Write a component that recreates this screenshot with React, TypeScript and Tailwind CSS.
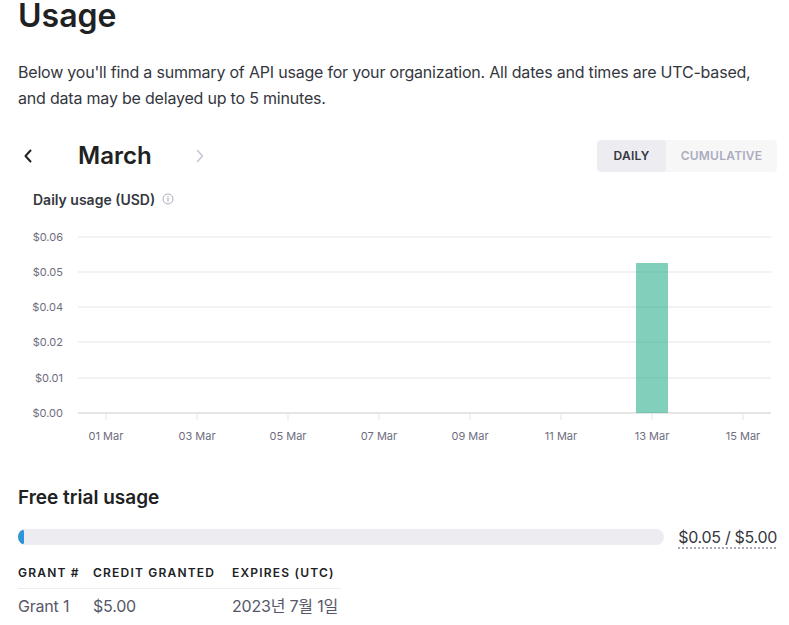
import React from "react";

const yTicks = [
  { label: "$0.06", y: 17 },
  { label: "$0.05", y: 52 },
  { label: "$0.04", y: 87 },
  { label: "$0.02", y: 122 },
  { label: "$0.01", y: 158 },
  { label: "$0.00", y: 193 },
];
const xTicks = ["01 Mar", "03 Mar", "05 Mar", "07 Mar", "09 Mar", "11 Mar", "13 Mar", "15 Mar"];

function Chart() {
  return (
    <svg width={759} height={230} className="block" style={{ fontFamily: "Inter, 'Noto Sans', sans-serif" }}>
      {yTicks.map((t) => (
        <g key={t.label}>
          <line x1={60} x2={753} y1={t.y} y2={t.y} stroke="#e5e5e5" strokeWidth={t.y === 193 ? 2 : 1} />
          <text x={45} y={t.y + 4} textAnchor="end" fontSize={11} fill="#6e6e80">
            {t.label}
          </text>
        </g>
      ))}
      {xTicks.map((l, i) => {
        const x = 88 + 91 * i;
        return (
          <g key={l}>
            <line x1={x} x2={x} y1={194} y2={200} stroke="#e5e5e5" strokeWidth={1} />
            <text x={x} y={220} textAnchor="middle" fontSize={11} fill="#6e6e80">
              {l}
            </text>
          </g>
        );
      })}
      <rect x={618} y={43} width={32} height={150} fill="#10a37f" fillOpacity={0.52} />
    </svg>
  );
}

export default function App() {
  return (
    <div className="w-[789px] h-[625px] overflow-hidden bg-white pl-[18px] pr-[12px] text-[#353740]" style={{ fontFamily: "Inter, 'Noto Sans', 'Noto Sans CJK KR', sans-serif" }}>
      <h1 className="mt-[-4px] text-[32px] leading-[40px] font-semibold text-[#202123]">Usage</h1>
      <p className="mt-[23px] pr-[6px] text-[16px] leading-[26px] tracking-[-0.2px] text-[#353740]">
        Below you'll find a summary of API usage for your organization. All dates and times are UTC-based, and data may be delayed up to 5 minutes.
      </p>
      <div className="mt-[29px] flex h-[32px] items-center justify-between">
        <div className="flex items-center">
          <button className="ml-[3px] flex h-[20px] w-[14px] items-center justify-center text-[#202123]">
            <svg width="10" height="14" viewBox="0 0 10 14" fill="none">
              <path d="M7.5 1.5L2.5 7l5 5.5" stroke="currentColor" strokeWidth="2" strokeLinecap="round" strokeLinejoin="round" />
            </svg>
          </button>
          <div className="ml-[43px] text-[24px] font-semibold leading-[32px] text-[#202123]">March</div>
          <button className="ml-[42px] flex h-[20px] w-[12px] items-center justify-center text-[#c5c5d2]">
            <svg width="10" height="14" viewBox="0 0 10 14" fill="none">
              <path d="M2.5 1.5L7.5 7l-5 5.5" stroke="currentColor" strokeWidth="1.5" strokeLinecap="round" strokeLinejoin="round" />
            </svg>
          </button>
        </div>
        <div className="flex h-[32px] overflow-hidden rounded-[4px] bg-[#f7f7f8] text-[12px] font-semibold tracking-[0.02em]">
          <div className="flex w-[69px] items-center justify-center rounded-[4px] bg-[#ececf1] text-[#353740]">DAILY</div>
          <div className="flex w-[111px] items-center justify-center text-[#acacbe]">CUMULATIVE</div>
        </div>
      </div>
      <div className="mt-[17px] flex h-[20px] items-center pl-[15px] text-[14px] font-semibold text-[#353740]">
        Daily usage (USD)
        <svg className="ml-[7px]" width="12" height="12" viewBox="0 0 12 12" fill="none">
          <circle cx="6" cy="6" r="5" stroke="#acacbe" strokeWidth="1" />
          <path d="M6 5.2v3" stroke="#acacbe" strokeWidth="1.1" strokeLinecap="round" />
          <circle cx="6" cy="3.7" r="0.65" fill="#acacbe" />
        </svg>
      </div>
      <div className="mt-[11px]">
        <Chart />
      </div>
      <h2 className="mt-[34px] text-[19px] font-semibold leading-[28px] text-[#202123]">Free trial usage</h2>
      <div className="mt-[14px] flex items-center">
        <div className="h-[16px] w-[646px] overflow-hidden rounded-full bg-[#ececf1]">
          <div className="h-full w-[6px] rounded-full bg-[#2d95d8]" />
        </div>
        <div className="ml-auto text-[16px] leading-[22px] tracking-[-0.3px] text-[#353740] underline decoration-dotted decoration-[#8e8ea0] underline-offset-[5px]">
          $0.05 / $5.00
        </div>
      </div>
      <table className="mt-[17px] border-collapse text-left">
        <thead>
          <tr className="border-b border-[#ececf1]">
            <th className="h-[23px] w-[75px] p-0 align-top text-[12px] font-semibold leading-[16px] tracking-[0.1em] text-[#202123]">GRANT #</th>
            <th className="h-[23px] w-[139px] p-0 align-top text-[12px] font-semibold leading-[16px] tracking-[0.1em] text-[#202123]">CREDIT GRANTED</th>
            <th className="h-[23px] w-[109px] p-0 align-top text-[12px] font-semibold leading-[16px] tracking-[0.1em] text-[#202123] whitespace-nowrap">EXPIRES (UTC)</th>
          </tr>
        </thead>
        <tbody>
          <tr>
            <td className="p-0 pt-[5px] text-[16px] leading-[24px] tracking-[-0.2px] text-[#565869]">Grant 1</td>
            <td className="p-0 pt-[5px] text-[16px] leading-[24px] tracking-[-0.2px] text-[#565869]">$5.00</td>
            <td className="p-0 pt-[5px] text-[16px] leading-[24px] tracking-[-0.2px] text-[#565869] whitespace-nowrap">2023년 7월 1일</td>
          </tr>
        </tbody>
      </table>
    </div>
  );
}
